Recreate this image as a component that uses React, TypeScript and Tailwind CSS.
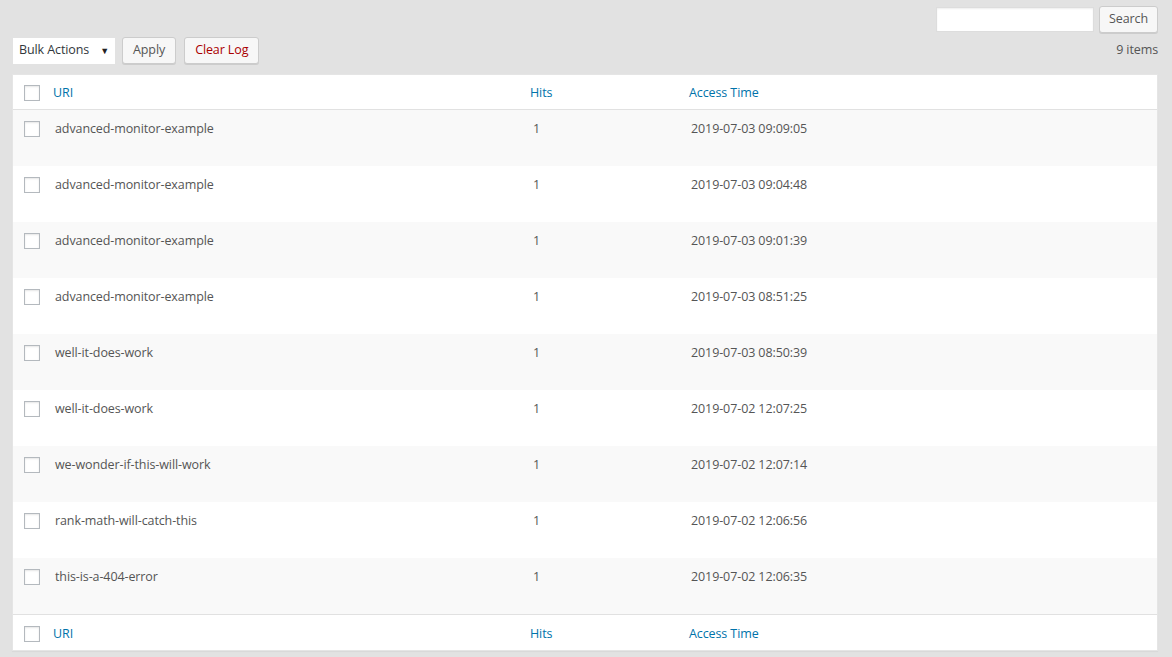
import React from 'react'

const rows = [
  { uri: 'advanced-monitor-example', hits: 1, time: '2019-07-03 09:09:05' },
  { uri: 'advanced-monitor-example', hits: 1, time: '2019-07-03 09:04:48' },
  { uri: 'advanced-monitor-example', hits: 1, time: '2019-07-03 09:01:39' },
  { uri: 'advanced-monitor-example', hits: 1, time: '2019-07-03 08:51:25' },
  { uri: 'well-it-does-work', hits: 1, time: '2019-07-03 08:50:39' },
  { uri: 'well-it-does-work', hits: 1, time: '2019-07-02 12:07:25' },
  { uri: 'we-wonder-if-this-will-work', hits: 1, time: '2019-07-02 12:07:14' },
  { uri: 'rank-math-will-catch-this', hits: 1, time: '2019-07-02 12:06:56' },
  { uri: 'this-is-a-404-error', hits: 1, time: '2019-07-02 12:06:35' },
]

function Checkbox() {
  return <span className="block w-4 h-4 bg-white border border-[#b4b9be] shadow-[inset_0_1px_2px_rgba(0,0,0,0.1)]" />
}

function HeaderRow({ top }: { top?: boolean }) {
  return (
    <div
      className={`grid grid-cols-[40px_477px_159px_1fr] items-center bg-white ${
        top ? 'h-[35px] pt-[2px] border-b border-[#e1e1e1]' : 'h-[36px] pt-[3px] border-t border-[#e1e1e1]'
      }`}
    >
      <div className="pl-[11px]">
        <Checkbox />
      </div>
      <div className="text-[#0073aa]">URI</div>
      <div className="text-[#0073aa]">Hits</div>
      <div className="text-[#0073aa]">Access Time</div>
    </div>
  )
}

export default function App() {
  return (
    <div
      className="w-[1172px] h-[657px] bg-[#e2e2e2] text-[12.5px] tracking-[-0.1px] text-[#555] overflow-hidden"
      style={{ fontFamily: '"Open Sans", "Liberation Sans", sans-serif' }}
    >
      {/* Search */}
      <div className="flex justify-end items-center gap-[5px] pt-[6px] pr-[14px]">
        <input className="w-[158px] h-[25px] bg-white border border-[#ddd] shadow-[inset_0_1px_2px_rgba(0,0,0,0.07)] outline-none" />
        <button className="h-[27px] px-[9px] bg-[#f7f7f7] border border-[#ccc] rounded-[3px] shadow-[0_1px_0_#ccc] text-[#555]">
          Search
        </button>
      </div>

      {/* Actions bar */}
      <div className="flex items-center pl-[13px] pr-[14px] mt-[4px] h-[27px]">
        <div className="flex items-center justify-between w-[102px] h-[26px] bg-white pl-[6px] pr-[6px] text-[#32373c]">
          <span>Bulk Actions</span>
          <span className="text-[9px] text-[#222]">▼</span>
        </div>
        <button className="ml-[7px] h-[27px] px-[10px] bg-[#f7f7f7] border border-[#ccc] rounded-[3px] shadow-[0_1px_0_#ccc] text-[#555]">
          Apply
        </button>
        <button className="ml-[8px] h-[27px] px-[10px] bg-[#f7f7f7] border border-[#ccc] rounded-[3px] shadow-[0_1px_0_#ccc] text-[#a00]">
          Clear Log
        </button>
        <div className="ml-auto">9 items</div>
      </div>

      {/* Table */}
      <div className="mx-[12px] mt-[10px] w-[1146px] bg-white border border-[#e5e5e5] shadow-[0_1px_1px_rgba(0,0,0,0.04)]">
        <HeaderRow top />
        {rows.map((r, i) => (
          <div
            key={i}
            className={`grid grid-cols-[40px_480px_158px_1fr] items-start h-[56px] pt-[10px] text-[#555] ${
              i % 2 === 0 ? 'bg-[#f9f9f9]' : 'bg-white'
            }`}
          >
            <div className="pl-[11px] pt-[1px]">
              <Checkbox />
            </div>
            <div className="leading-[17px] pl-[2px]">{r.uri}</div>
            <div className="leading-[17px]">{r.hits}</div>
            <div className="leading-[17px]">{r.time}</div>
          </div>
        ))}
        <HeaderRow />
      </div>
    </div>
  )
}
